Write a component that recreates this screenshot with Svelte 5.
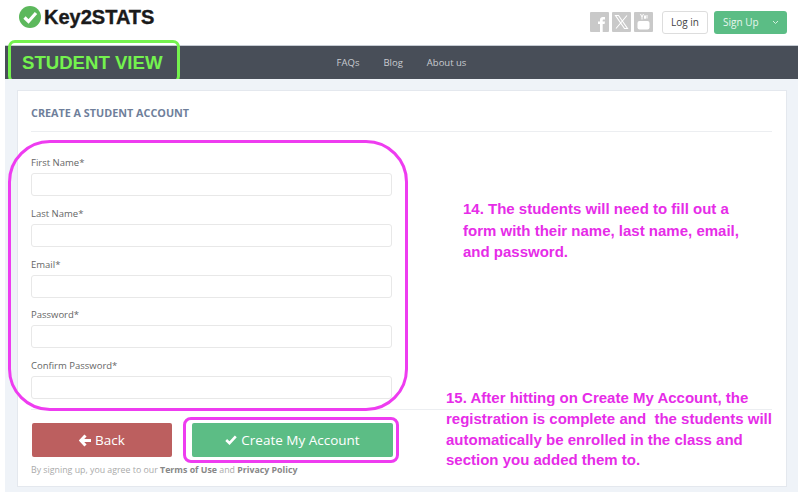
<script>
  const fields = ['First Name*', 'Last Name*', 'Email*', 'Password*', 'Confirm Password*'];
  const links = ['FAQs', 'Blog', 'About us'];
</script>

<div class="page">
  <header class="top">
    <div class="logo">
      <svg width="24" height="24" viewBox="0 0 24 24">
        <circle cx="12" cy="12" r="11" fill="#5cb85c" />
        <path d="M6.500 12.500l4 4 7.500-8.500" fill="none" stroke="#fff" stroke-width="3.200" />
      </svg>
      <span>Key2STATS</span>
    </div>
    <div class="actions">
      <div class="social">
        <span class="soc">
          <svg width="19" height="20" viewBox="0 0 19 20"><path d="M10 20v-8H8V9.500h2V7.800C10 5.800 11.200 5 12.800 5H15v2.600h-1.300c-.8 0-1 .4-1 1v.9H15l-.4 2.500h-1.900v8z" fill="#fff" /></svg>
        </span>
        <span class="soc">
          <svg width="19" height="20" viewBox="0 0 19 20"><path d="M3.500 3.500h3l9 13h-3zM15 3.500L4 16.500" fill="none" stroke="#fff" stroke-width="1.100" /></svg>
        </span>
        <span class="soc">
          <svg width="19" height="20" viewBox="0 0 19 20"><path d="M6.500 2l1.500 3 1.500-3M8 5v2.500M10.500 3.500v3h1v-3M13 3v3.500" fill="none" stroke="#fff" stroke-width="1" /><rect x="3.500" y="9" width="12" height="8.500" rx="2" fill="#fff" /></svg>
        </span>
      </div>
      <button class="login">Log in</button>
      <button class="signup">
        <span>Sign Up</span>
        <svg width="7" height="5" viewBox="0 0 7 5"><path d="M1 1l2.500 2.500L6 1" fill="none" stroke="#d6f0e0" stroke-width="1" /></svg>
      </button>
    </div>
  </header>

  <nav class="nav">
    {#each links as link}
      <span>{link}</span>
    {/each}
    <div class="view-box">STUDENT VIEW</div>
  </nav>

  <main class="main">
    <section class="card">
      <h1>CREATE A STUDENT ACCOUNT</h1>
      <form class="form">
        {#each fields as f}
          <label>
            <span>{f}</span>
            <input type="text" />
          </label>
        {/each}
      </form>
      <div class="buttons">
        <button type="button" class="btn back">
          <svg width="12" height="13" viewBox="0 0 12 13"><path d="M6.500 1.500L1.800 6.500l4.700 5M3 6.500h9" fill="none" stroke="#fff" stroke-width="3" /></svg>
          Back
        </button>
        <button type="button" class="btn create">
          <svg width="12" height="10" viewBox="0 0 12 10"><path d="M1.200 5l3.300 3.200 6.300-6.900" fill="none" stroke="#fff" stroke-width="2.600" /></svg>
          Create My Account
        </button>
      </div>
      <p class="terms">By signing up, you agree to our <b>Terms of Use</b> and <b>Privacy Policy</b></p>
    </section>
    <div class="ring form-ring"></div>
    <div class="ring create-ring"></div>
    <p class="note note-14">14. The students will need to fill out a form with their name, last name, email, and password.</p>
    <p class="note note-15">15. After hitting on Create My Account, the registration is complete and&nbsp; the students will automatically be enrolled in the class and section you added them to.</p>
  </main>
</div>

<style>
  :global(body) {
    margin: 0;
    background: #fff;
  }
  .page {
    width: 800px;
    height: 492px;
    overflow: hidden;
    font-family: "Open Sans", sans-serif;
    color: #555;
  }
  .top {
    height: 44px;
    display: flex;
    justify-content: space-between;
    align-items: center;
    padding: 0 13px 0 18px;
  }
  .logo {
    display: flex;
    align-items: center;
    gap: 2px;
    margin-top: -10px;
    font: 700 20px "Liberation Sans", sans-serif;
    color: #1a1a1a;
    -webkit-text-stroke: 0.4px #1a1a1a;
  }
  .actions {
    display: flex;
    align-items: center;
    gap: 8px;
  }
  .social {
    display: flex;
    gap: 3px;
    margin-right: 1px;
  }
  .soc {
    width: 19px;
    height: 20px;
    background: #c9c9c9;
    border-radius: 1px;
    display: block;
    overflow: hidden;
  }
  .soc svg {
    display: block;
  }
  .login {
    height: 23px;
    width: 46px;
    padding: 0;
    background: #fff;
    border: 1px solid #ddd;
    border-radius: 3px;
    font: 10px "Open Sans", sans-serif;
    color: #444;
  }
  .signup {
    height: 23px;
    width: 73px;
    margin-left: -2px;
    padding: 0 8px 0 9px;
    display: flex;
    justify-content: space-between;
    align-items: center;
    background: #5bbd85;
    border: none;
    border-radius: 3px;
    font: 10px "Open Sans", sans-serif;
    color: #e8f6ee;
  }
  .nav {
    position: relative;
    margin: 1px 2px 0 5px;
    height: 34px;
    background: #484e58;
    border-top: 1px solid #c6ccd4;
    display: flex;
    justify-content: center;
    align-items: center;
    gap: 24px;
    font-size: 9.500px;
    color: #c9ccd1;
    box-sizing: border-box;
  }
  .view-box {
    position: absolute;
    left: 3px;
    top: -6px;
    width: 172px;
    height: 43px;
    border: 3px solid #74f24e;
    border-radius: 7px;
    display: flex;
    align-items: center;
    padding: 3px 0 0 11px;
    box-sizing: border-box;
    font: 700 18.600px "Liberation Sans", sans-serif;
    color: #74f24e;
  }
  .main {
    position: relative;
    margin: 0 2px 0 5px;
    height: 413px;
    background: #eff3f8;
    padding: 11px 0 0 12px;
    box-sizing: border-box;
  }
  .card {
    width: 770px;
    height: 397px;
    background: #fff;
    border: 1px solid #e4e8ee;
    box-sizing: border-box;
    padding: 14px 14px 14px 13px;
  }
  h1 {
    margin: 0;
    font-size: 10.800px;
    line-height: 16px;
    font-weight: 700;
    color: #6f7f9b;
    padding-bottom: 10px;
    border-bottom: 1px solid #eceef1;
  }
  .form {
    display: flex;
    flex-direction: column;
    gap: 9.800px;
    padding: 23px 0 10px;
    border-bottom: 1px solid #eceef1;
  }
  label {
    width: 361px;
    display: flex;
    flex-direction: column;
    gap: 3px;
    font-size: 9.500px;
    line-height: 15px;
    color: #666;
  }
  input {
    height: 23px;
    border: 1px solid #e8e8e8;
    border-radius: 3px;
    box-sizing: border-box;
    background: #fff;
  }
  .buttons {
    display: flex;
    gap: 20px;
    margin: 13px 0 0 1px;
  }
  .btn {
    height: 34px;
    border: none;
    border-radius: 2px;
    color: #fff;
    font: 13.500px "Open Sans", sans-serif;
    display: flex;
    justify-content: center;
    align-items: center;
    gap: 4px;
    padding: 0;
  }
  .back {
    width: 140px;
    background: #bc5f5f;
  }
  .create {
    width: 201px;
    background: #5cbd85;
  }
  .terms {
    margin: 7px 0 0;
    font-size: 8.800px;
    line-height: 13px;
    color: #aaa;
  }
  .terms b {
    color: #888;
  }
  .ring {
    position: absolute;
    border: 3px solid #ee3cf0;
    box-sizing: border-box;
    pointer-events: none;
  }
  .form-ring {
    left: 3px;
    top: 61px;
    width: 400px;
    height: 271px;
    border-radius: 42px;
  }
  .create-ring {
    left: 178px;
    top: 338px;
    width: 216px;
    height: 46px;
    border-radius: 8px;
  }
  .note {
    position: absolute;
    margin: 0;
    font: 700 15px/21.500px "Liberation Sans", sans-serif;
    color: #e62ce8;
  }
  .note-14 {
    left: 458px;
    top: 119px;
    width: 290px;
  }
  .note-15 {
    left: 441px;
    top: 309px;
    width: 335px;
    line-height: 20.800px;
  }
</style>
